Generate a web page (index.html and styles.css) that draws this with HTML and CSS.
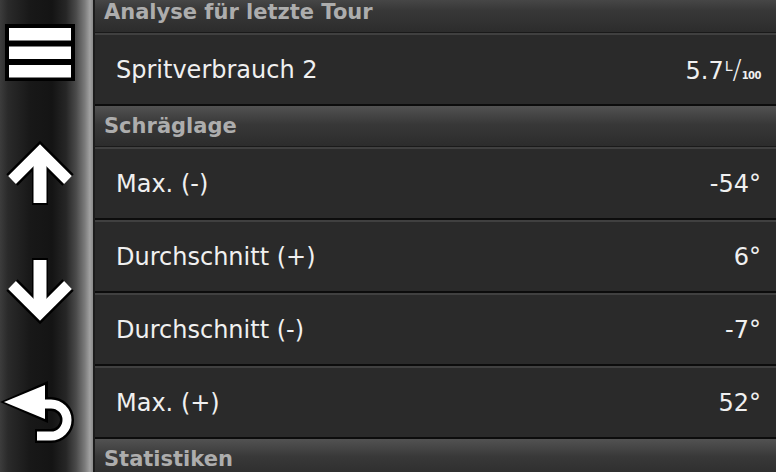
FILE: index.html
```html
<!DOCTYPE html>
<html lang="de">
<head>
<meta charset="utf-8">
<title>Analyse</title>
<link rel="stylesheet" href="styles.css">
</head>
<body>
<div class="screen">
  <nav class="sidebar">
    <div class="btn">
      <svg viewBox="0 0 93 118" width="93" height="118">
        <rect x="5" y="24" width="70" height="57" fill="#000"/>
        <rect x="9" y="28" width="62" height="12.5" fill="#fff"/>
        <rect x="9" y="46.5" width="62" height="12.5" fill="#fff"/>
        <rect x="9" y="65" width="62" height="12.5" fill="#fff"/>
      </svg>
    </div>
    <div class="btn">
      <svg viewBox="0 0 93 118" width="93" height="118">
        <g fill="none" stroke="#000" stroke-width="16" stroke-linejoin="miter">
          <path d="M12 62 L40 34 L68 62"/>
          <path d="M40 40 V87"/>
        </g>
        <g fill="none" stroke="#fff" stroke-width="11" stroke-linejoin="miter">
          <path d="M12 62 L40 34 L68 62"/>
          <path d="M40 40 V85" stroke-width="13"/>
        </g>
      </svg>
    </div>
    <div class="btn">
      <svg viewBox="0 0 93 118" width="93" height="118">
        <g fill="none" stroke="#000" stroke-width="16" stroke-linejoin="miter">
          <path d="M12 49 L40 77 L68 49"/>
          <path d="M40 22 V70"/>
        </g>
        <g fill="none" stroke="#fff" stroke-width="11" stroke-linejoin="miter">
          <path d="M12 49 L40 77 L68 49"/>
          <path d="M40 24 V70" stroke-width="13"/>
        </g>
      </svg>
    </div>
    <div class="btn">
      <svg viewBox="0 0 93 118" width="93" height="118">
        <polygon points="0,48 48,27 48,69" fill="#000"/>
        <path d="M40 50 H51 A16 16 0 0 1 51 82 H35" fill="none" stroke="#000" stroke-width="14"/>
        <polygon points="4,48 45,31 45,65" fill="#fff"/>
        <path d="M40 50 H51 A16 16 0 0 1 51 82 H37" fill="none" stroke="#fff" stroke-width="9"/>
      </svg>
    </div>
  </nav>
  <main class="list">
    <div class="hdr">Analyse für letzte Tour</div>
    <div class="row">
      <span class="label">Spritverbrauch 2</span>
      <span class="val">5.7<span class="frac"><span class="num">L</span><span class="slash">/</span><span class="den">100</span></span></span>
    </div>
    <div class="hdr">Schräglage</div>
    <div class="row"><span class="label">Max. (-)</span><span class="val">-54°</span></div>
    <div class="row"><span class="label">Durchschnitt (+)</span><span class="val">6°</span></div>
    <div class="row"><span class="label">Durchschnitt (-)</span><span class="val">-7°</span></div>
    <div class="row"><span class="label">Max. (+)</span><span class="val">52°</span></div>
    <div class="hdr">Statistiken</div>
  </main>
</div>
</body>
</html>
```

FILE: styles.css
```css
html, body {
  margin: 0;
  padding: 0;
  background: #222;
  overflow: hidden;
}

.screen {
  display: flex;
  width: 776px;
  height: 472px;
  overflow: hidden;
  font-family: "DejaVu Sans", "Liberation Sans", sans-serif;
}

.sidebar {
  flex: none;
  width: 93px;
  display: flex;
  flex-direction: column;
  background: linear-gradient(to right,
    #3c3c3c 0px, #2a2a2a 8px, #181818 30px, #141414 52px,
    #262626 66px, #4a4a4a 76px, #7c7c7c 85px, #a2a2a2 90px, #8a8a8a 93px);
}

.btn {
  flex: none;
  height: 118px;
}

.btn svg {
  display: block;
}

.list {
  flex: 1;
  min-width: 0;
  margin-top: -8px;
  display: flex;
  flex-direction: column;
  border-left: 2px solid #1c1c1c;
  background: #2a2a2a;
}

.hdr {
  flex: none;
  box-sizing: border-box;
  height: 41px;
  padding-left: 9px;
  display: flex;
  align-items: center;
  font-size: 21px;
  font-weight: bold;
  color: #adadad;
  background: linear-gradient(#525252, #383838 45%, #2c2c2c);
  border-bottom: 1px solid #1a1a1a;
}

.row {
  flex: none;
  box-sizing: border-box;
  height: 73px;
  padding: 0 15px 0 21px;
  display: flex;
  align-items: center;
  justify-content: space-between;
  font-size: 24px;
  color: #f0f0f0;
  background: #2a2a2a;
  border-top: 2px solid #404040;
  border-bottom: 2px solid #0c0c0c;
}

.val {
  white-space: nowrap;
}

.frac {
  display: inline-block;
  margin-left: 1px;
}

.num {
  font-size: 14px;
  vertical-align: 8px;
}

.slash {
  font-size: 27px;
  font-weight: 300;
}

.den {
  font-size: 10px;
  letter-spacing: -0.5px;
  font-weight: bold;
}
```
